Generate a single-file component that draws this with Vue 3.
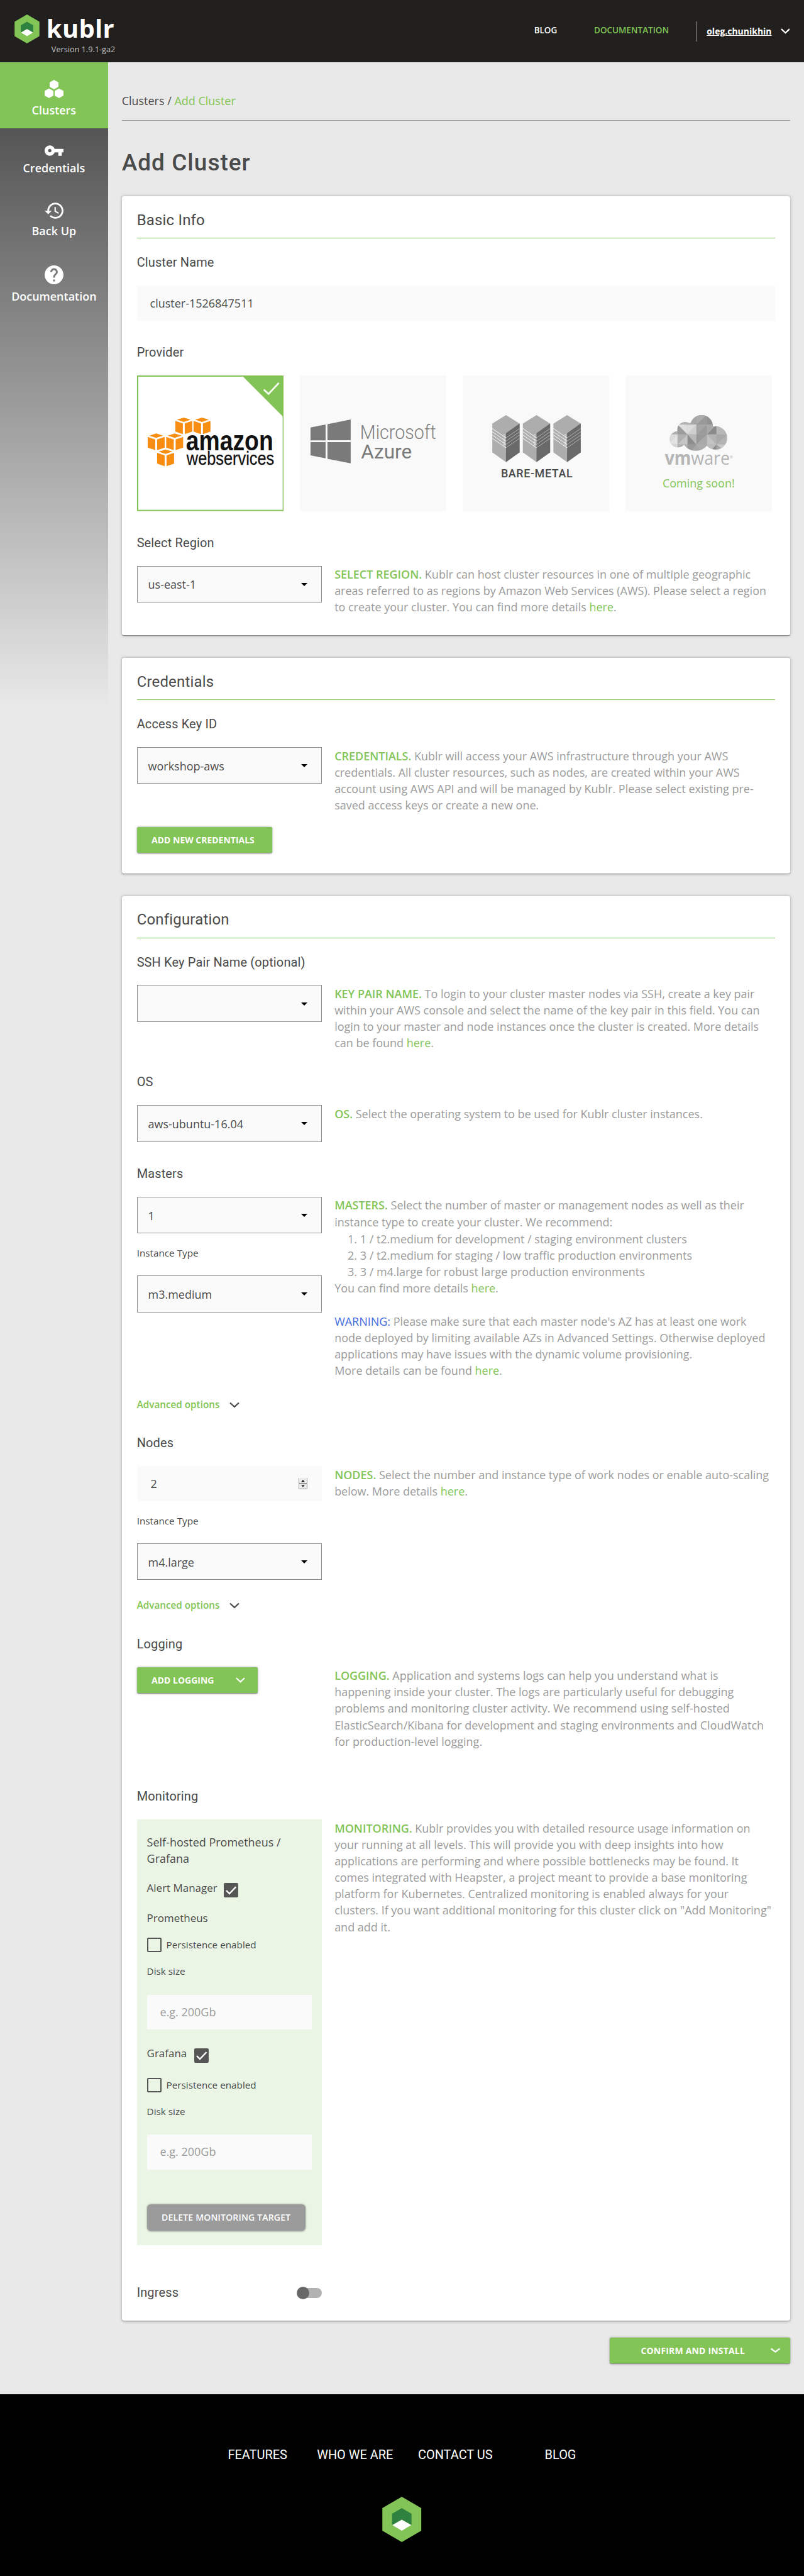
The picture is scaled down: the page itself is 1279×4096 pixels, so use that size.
<script setup>
const nav = [
  { id: 'clusters', label: 'Clusters', active: true },
  { id: 'credentials', label: 'Credentials' },
  { id: 'backup', label: 'Back Up' },
  { id: 'docs', label: 'Documentation' },
]
const awsCubes = [
  [53, 67], [82, 67], [9, 92.5], [38.5, 92.5], [24, 118],
]
const racks = [0, 48.7, 97.4]
const rackLines = [0, 5.2, 10.4, 15.6]
// [points, grey level] for each facet of the cloud
const facets = [
  ['99,78 113,78 99,94', '#dcdcdc'], ['113,78 113,94 99,94', '#cfcfcf'],
  ['83,78 99,94 83,94', '#9c9c9c'], ['83,78 99,78 99,94', '#dedede'],
  ['113,62 130,62 113,78', '#ababab'], ['113,78 130,62 130,78', '#999'],
  ['130,62 145,78 130,78', '#929292'], ['99,78 113,62 113,78', '#a6a6a6'],
  ['113,78 130,78 113,94', '#a5a5a5'], ['130,78 130,94 113,94', '#9b9b9b'],
  ['130,78 145,78 130,94', '#a9a9a9'], ['145,78 145,94 130,94', '#8b8b8b'],
  ['145,78 162,78 162,94 145,94', '#b8b8b8'],
  ['67,94 83,94 67,110', '#dadada'], ['83,94 83,110 67,110', '#e2e2e2'],
  ['83,94 99,94 83,110', '#b0b0b0'], ['99,94 99,110 83,110', '#c4c4c4'],
  ['99,94 113,110 99,110', '#8d8d8d'], ['99,94 113,94 113,110', '#b9b9b9'],
  ['113,94 130,94 113,110', '#999'], ['130,94 130,110 113,110', '#a9a9a9'],
  ['130,94 145,94 145,110', '#b3b3b3'], ['130,94 145,110 130,110', '#c3c3c3'],
  ['145,94 162,94 145,110', '#a9a9a9'], ['162,94 162,110 145,110', '#b4b4b4'],
  ['67,110 83,110 83,120 67,120', '#d6d6d6'], ['83,110 99,110 99,122 83,122', '#b0b0b0'],
  ['99,110 113,110 104,122 99,122', '#9a9a9a'], ['113,110 122,122 104,122', '#a6a6a6'],
  ['113,110 130,110 130,122 122,122', '#adadad'], ['130,110 145,110 136,122 130,122', '#bcbcbc'],
  ['145,110 145,122 134,122', '#8c8c8c'], ['145,110 162,110 162,122', '#cacaca'],
  ['145,110 158,122 145,122', '#a2a2a2'],
]
const footerLinks = ['FEATURES', 'WHO WE ARE', 'CONTACT US', 'BLOG']
</script>

<template>
  <div class="page">
    <header class="top">
      <svg class="logo" viewBox="0 0 62 72">
        <path d="M31 0 62 18V54L31 72 0 54V18z" fill="#82c556" />
        <path d="M31 18 46.5 27V45L31 36.500 15.500 45V27z" fill="#2f813f" />
        <path d="M31 36.500 46 45 31 54 16 45z" fill="#fff" />
      </svg>
      <div class="brand">
        <div class="word">kublr</div>
        <div class="version">Version 1.9.1-ga2</div>
      </div>
      <nav class="topnav">
        <a class="blog">BLOG</a>
        <a class="doc">DOCUMENTATION</a>
        <div class="user">
          <a>oleg.chunikhin</a>
          <svg width="15" height="9" viewBox="0 0 15 9"><path d="M1 1.200 7.500 7.300 14 1.200" fill="none" stroke="#fff" stroke-width="2.300" /></svg>
        </div>
      </nav>
    </header>

    <div class="body">
      <aside class="side">
        <a v-for="n in nav" :key="n.id" class="item" :class="{ active: n.active }">
          <svg v-if="n.id === 'clusters'" width="30" height="29" viewBox="0 0 30 29" fill="#fff">
            <path d="M15 0 22 4V11L15 15 8 11V4zM7 13.700 14 17.500V25L7 29 0 25V17.500zM23 13.700 30 17.500V25L23 29 16 25V17.500z" />
          </svg>
          <svg v-else-if="n.id === 'credentials'" width="30" height="17" viewBox="1 6 22 12" fill="#fff">
            <path d="M12.650 10C11.830 7.670 9.610 6 7 6c-3.310 0-6 2.690-6 6s2.690 6 6 6c2.610 0 4.830-1.670 5.650-4H17v4h4v-4h2v-4H12.650zM7 14c-1.100 0-2-.900-2-2s.900-2 2-2 2 .900 2 2-.900 2-2 2z" />
          </svg>
          <svg v-else-if="n.id === 'backup'" width="30" height="26" viewBox="1 3 21 18" fill="#fff">
            <path d="M13 3c-4.970 0-9 4.030-9 9H1l3.890 3.890.070.140L9 12H6c0-3.870 3.130-7 7-7s7 3.130 7 7-3.130 7-7 7c-1.930 0-3.680-.790-4.940-2.060l-1.420 1.420C8.270 19.990 10.510 21 13 21c4.970 0 9-4.030 9-9s-4.030-9-9-9zm-1 5v5l4.280 2.540.720-1.210-3.500-2.080V8H12z" />
          </svg>
          <svg v-else width="30" height="30" viewBox="2 2 20 20" fill="#fff">
            <path d="M12 2C6.480 2 2 6.480 2 12s4.480 10 10 10 10-4.480 10-10S17.520 2 12 2zm1 17h-2v-2h2v2zm2.070-7.750l-.900.920C13.450 12.900 13 13.500 13 15h-2v-.500c0-1.100.450-2.100 1.170-2.830l1.240-1.260c.370-.360.590-.860.590-1.410 0-1.100-.900-2-2-2s-2 .900-2 2H8c0-2.210 1.790-4 4-4s4 1.790 4 4c0 .880-.360 1.680-.930 2.250z" />
          </svg>
          <span>{{ n.label }}</span>
        </a>
      </aside>

      <main class="main">
        <div class="crumbs">Clusters / <a>Add Cluster</a></div>
        <h1>Add Cluster</h1>

        <section class="card basic">
          <h2>Basic Info</h2>
          <div class="sec s-name">
            <h3>Cluster Name</h3>
            <div class="input">cluster-1526847511</div>
          </div>
          <div class="sec s-provider">
            <h3>Provider</h3>
            <div class="providers">
              <svg class="prov" viewBox="0 0 234 216">
                <rect x="1" y="1" width="232" height="214" fill="#fff" stroke="#82c556" stroke-width="2" />
                <path d="M168 1H233V66z" fill="#82c556" />
                <path d="M202 22.500 209.500 29.500 226 12" fill="none" stroke="#fff" stroke-width="2.600" />
                <g v-for="(c, i) in awsCubes" :key="i" :transform="`translate(${c[0] + 8} ${c[1]})`" fill="#f78e11">
                  <path d="M13.500 0 24.500 3.300 13.500 7 2.500 3.300z" />
                  <path d="M0 5.300 12 9.300V26.500L0 22.500z" />
                  <path d="M27 5.300 15 9.300V26.500L27 22.500z" />
                </g>
                <text transform="translate(78 119.500) scale(.83 1)" class="amz">amazon</text>
                <text transform="translate(79 142) scale(.875 1)" class="ws">webservices</text>
              </svg>
              <svg class="prov" viewBox="0 0 234 216">
                <rect width="234" height="216" fill="#f9f9f9" />
                <path d="M17 82.800 41 78.200V103.400H17zM44 77.600 81 70V103.200H44zM17 106.200H41V132L17 127.200zM44 106.200H81V140L44 132.600z" fill="#7a7a7a" />
                <text x="96" y="101" class="ms" textLength="121" lengthAdjust="spacingAndGlyphs">Microsoft</text>
                <text x="97.500" y="132" class="az" textLength="81" lengthAdjust="spacingAndGlyphs">Azure</text>
              </svg>
              <svg class="prov" viewBox="0 0 234 216">
                <rect width="234" height="216" fill="#f9f9f9" />
                <g v-for="x in racks" :key="x" :transform="`translate(${x} 0)`">
                  <path d="M69 63 90.700 76.500V122.500L69 138 47.200 122.500V76.500z" fill="#adadad" />
                  <path d="M90.700 76.500V122.500L69 138V92z" fill="#696969" />
                  <path v-for="l in rackLines" :key="l" :d="`M47.200 ${84.500 + l} 69 ${99.500 + l}`" stroke="#f0f0f0" stroke-width="1.200" stroke-dasharray="2.200 .5" />
                  <path v-for="l in rackLines" :key="'r' + l" :d="`M69 ${99.500 + l} 90.700 ${84.500 + l}`" stroke="#b0b0b0" stroke-width="1" />
                  <path d="M66 94V112" stroke="#f0f0f0" stroke-width="2.400" stroke-dasharray="1 1.500" />
                </g>
                <text x="61" y="162.500" class="bm" textLength="114">BARE-METAL</text>
              </svg>
              <svg class="prov" viewBox="0 0 234 216">
                <defs>
                  <clipPath id="cloud">
                    <circle cx="121.300" cy="81" r="18" /><circle cx="143.500" cy="99.500" r="18.500" />
                    <circle cx="95" cy="86.500" r="12.500" /><circle cx="83.500" cy="101.500" r="13" />
                    <circle cx="112" cy="97" r="23" />
                  </clipPath>
                </defs>
                <rect width="234" height="216" fill="#f9f9f9" />
                <g clip-path="url(#cloud)">
                  <rect x="60" y="60" width="110" height="65" fill="#b0b0b0" />
                  <polygon v-for="(f, i) in facets" :key="i" :points="f[0]" :fill="f[1]" />
                </g>
                <text x="62.500" y="142" class="vm" textLength="42" lengthAdjust="spacingAndGlyphs">vm</text>
                <text x="104.500" y="142" class="ware" textLength="62" lengthAdjust="spacingAndGlyphs">ware</text>
                <text x="166" y="132" class="reg">®</text>
                <text x="59" y="178" class="soon" textLength="115">Coming soon!</text>
              </svg>
            </div>
          </div>
          <div class="sec">
            <h3>Select Region</h3>
            <div class="cols">
              <div class="select">us-east-1<i></i></div>
              <p class="help"><b>SELECT REGION.</b> Kublr can host cluster resources in one of multiple geographic<br>areas referred to as regions by Amazon Web Services (AWS). Please select a region<br>to create your cluster. You can find more details <a>here</a>.</p>
            </div>
          </div>
        </section>

        <section class="card creds">
          <h2>Credentials</h2>
          <div class="sec s-key">
            <h3>Access Key ID</h3>
            <div class="cols">
              <div class="select">workshop-aws<i></i></div>
              <p class="help"><b>CREDENTIALS.</b> Kublr will access your AWS infrastructure through your AWS<br>credentials. All cluster resources, such as nodes, are created within your AWS<br>account using AWS API and will be managed by Kublr. Please select existing pre-<br>saved access keys or create a new one.</p>
            </div>
          </div>
          <button class="btn new-cred">ADD NEW CREDENTIALS</button>
        </section>

        <section class="card config">
          <h2>Configuration</h2>
          <div class="sec s-ssh">
            <h3>SSH Key Pair Name (optional)</h3>
            <div class="cols">
              <div class="select"><i></i></div>
              <p class="help"><b>KEY PAIR NAME.</b> To login to your cluster master nodes via SSH, create a key pair<br>within your AWS console and select the name of the key pair in this field. You can<br>login to your master and node instances once the cluster is created. More details<br>can be found <a>here</a>.</p>
            </div>
          </div>
          <div class="sec s-os">
            <h3>OS</h3>
            <div class="cols">
              <div class="select">aws-ubuntu-16.04<i></i></div>
              <p class="help"><b>OS.</b> Select the operating system to be used for Kublr cluster instances.</p>
            </div>
          </div>
          <div class="sec s-masters">
            <h3>Masters</h3>
            <div class="cols">
              <div>
                <div class="select">1<i></i></div>
                <div class="sub">Instance Type</div>
                <div class="select">m3.medium<i></i></div>
                <div class="adv far">Advanced options <svg width="16" height="10" viewBox="0 0 16 10"><path d="M1 1.500 8 8 15 1.500" fill="none" stroke="#4a4a4a" stroke-width="2.300" /></svg></div>
              </div>
              <div class="help">
                <b>MASTERS.</b> Select the number of master or management nodes as well as their<br>instance type to create your cluster. We recommend:
                <ol>
                  <li>1. 1 / t2.medium for development / staging environment clusters</li>
                  <li>2. 3 / t2.medium for staging / low traffic production environments</li>
                  <li>3. 3 / m4.large for robust large production environments</li>
                </ol>
                You can find more details <a>here</a>.<br><br><em>WARNING:</em> Please make sure that each master node's AZ has at least one work<br>node deployed by limiting available AZs in Advanced Settings. Otherwise deployed<br>applications may have issues with the dynamic volume provisioning.<br>More details can be found <a>here</a>.
              </div>
            </div>
          </div>
          <div class="sec s-nodes">
            <h3>Nodes</h3>
            <div class="cols">
              <div>
                <div class="input number">2
                  <svg width="14" height="18" viewBox="0 0 14 18">
                    <path d="M.5 0V8.500H13.500V0M.5 9.500H13.500V17.500H.5z" fill="#ececec" stroke="#999" />
                    <path d="M7 3 9.800 6.200H4.200zM7 14.500 4.200 11.500H9.800z" fill="#111" />
                  </svg>
                </div>
                <div class="sub">Instance Type</div>
                <div class="select">m4.large<i></i></div>
                <div class="adv">Advanced options <svg width="16" height="10" viewBox="0 0 16 10"><path d="M1 1.500 8 8 15 1.500" fill="none" stroke="#4a4a4a" stroke-width="2.300" /></svg></div>
              </div>
              <p class="help"><b>NODES.</b> Select the number and instance type of work nodes or enable auto-scaling<br>below. More details <a>here</a>.</p>
            </div>
          </div>
          <div class="sec s-logging">
            <h3>Logging</h3>
            <div class="cols">
              <button class="btn add-log">ADD LOGGING <svg width="15" height="9" viewBox="0 0 15 9"><path d="M1 1.200 7.500 7.300 14 1.200" fill="none" stroke="#fff" stroke-width="2.200" /></svg></button>
              <p class="help"><b>LOGGING.</b> Application and systems logs can help you understand what is<br>happening inside your cluster. The logs are particularly useful for debugging<br>problems and monitoring cluster activity. We recommend using self-hosted<br>ElasticSearch/Kibana for development and staging environments and CloudWatch<br>for production-level logging.</p>
            </div>
          </div>
          <div class="sec s-monitoring">
            <h3>Monitoring</h3>
            <div class="cols">
              <div class="target">
                <div class="t-title">Self-hosted Prometheus /<br>Grafana</div>
                <div class="t-row alert">Alert Manager <svg class="on" viewBox="0 0 23 23"><rect width="23" height="23" rx="2" fill="#555" /><path d="M4 12 9 17 19.500 6" fill="none" stroke="#fff" stroke-width="2.400" /></svg></div>
                <div class="t-row prom">Prometheus</div>
                <div class="t-check"><span class="box"></span>Persistence enabled</div>
                <div class="t-sub">Disk size</div>
                <div class="t-input">e.g. 200Gb</div>
                <div class="t-row graf">Grafana <svg class="on" viewBox="0 0 23 23"><rect width="23" height="23" rx="2" fill="#555" /><path d="M4 12 9 17 19.500 6" fill="none" stroke="#fff" stroke-width="2.400" /></svg></div>
                <div class="t-check second"><span class="box"></span>Persistence enabled</div>
                <div class="t-sub">Disk size</div>
                <div class="t-input">e.g. 200Gb</div>
                <button class="btn delete">DELETE MONITORING TARGET</button>
              </div>
              <p class="help"><b>MONITORING.</b> Kublr provides you with detailed resource usage information on<br>your running at all levels. This will provide you with deep insights into how<br>applications are performing and where possible bottlenecks may be found. It<br>comes integrated with Heapster, a project meant to provide a base monitoring<br>platform for Kubernetes. Centralized monitoring is enabled always for your<br>clusters. If you want additional monitoring for this cluster click on "Add Monitoring"<br>and add it.</p>
            </div>
          </div>
          <div class="ingress">
            <h3>Ingress</h3>
            <svg width="40" height="20" viewBox="0 0 40 20"><rect x="4" y="2" width="36" height="16" rx="8" fill="#b2b2b2" /><circle cx="10" cy="10" r="10" fill="#686868" /></svg>
          </div>
        </section>

        <button class="btn confirm"><span>CONFIRM AND INSTALL</span><svg width="15" height="9" viewBox="0 0 15 9"><path d="M.5 1.500 7.500 6.700 14.500 1.500" fill="none" stroke="#fff" stroke-width="2.300" /></svg></button>
      </main>
    </div>

    <footer class="foot">
      <div class="links"><a v-for="l in footerLinks" :key="l">{{ l }}</a></div>
      <svg class="flogo" viewBox="0 0 62 72">
        <path d="M31 0 62 18V54L31 72 0 54V18z" fill="#82c556" />
        <path d="M31 18 46.500 27V45L31 36.500 15.500 45V27z" fill="#2f813f" />
        <path d="M31 36.500 46 45 31 54 16 45z" fill="#fff" />
      </svg>
    </footer>
  </div>
</template>

<style>
html, body { margin: 0; background: #000; }
</style>

<style scoped>
* { box-sizing: border-box; }
svg { display: block; flex: none; }
.page { zoom: 0.99844; width: 1281px; height: 4103px; overflow: hidden; background: #e9e9e9; font-family: "Open Sans", sans-serif; font-size: 18px; color: #4a4a4a; white-space: nowrap; }

.top { height: 99px; background: #22201e; display: flex; align-items: flex-start; color: #fff; }
.logo { width: 40px; height: 46px; margin: 23px 0 0 23px; }
.brand { margin: 25px 0 0 11px; }
.word { font-size: 40px; font-weight: 700; line-height: 40px; letter-spacing: .3px; }
.version { font-size: 12.700px; line-height: 16px; margin: 6px 0 0 8px; color: #c4c4c4; }
.topnav { margin-left: auto; width: 430px; padding-top: 34px; display: grid; grid-template-columns: 95.600px 162.400px 1fr; font-weight: 600; font-size: 13.500px; line-height: 30px; }
.doc { color: #82c556; }
.user { display: flex; align-items: center; border-left: 1px solid #999; padding-left: 16px; font-weight: 700; font-size: 14px; }
.user a { text-decoration: underline; line-height: 32px; }
.user svg { margin-left: 14px; }

.body { display: flex; height: 3714px; }
.side { width: 172px; flex: none; background: linear-gradient(#555, #e9e9e9) 0 105px / 100% 925px no-repeat; }
.item { display: flex; flex-direction: column; align-items: center; padding: 27px 0 15.500px; color: #fff; font-weight: 600; }
.item.active { background: #82c556; height: 105px; padding-top: 28px; }
.item span { margin-top: 8px; line-height: 24px; }

.main { flex: 1; padding: 49px 22px 0; }
.crumbs { height: 44px; line-height: 26px; border-bottom: 1px solid #999; }
a { color: inherit; }
.crumbs a, .help a { color: #82c556; }
h1 { margin: 43.500px 0 29.500px; font: 500 37px/48px Roboto, sans-serif; letter-spacing: 1.050px; }
.card { background: #fff; border-radius: 3px; padding: 0 24px; margin-bottom: 36px; box-shadow: 0 1px 1px #888, 0 1px 5px rgba(0, 0, 0, .25); }
.basic { height: 699px; }
.creds { height: 343px; }
.config { height: 2269px; margin-bottom: 27px; }
h2 { margin: 0 0 24px; height: 67px; padding-top: 22.500px; font: 400 24px/32px Roboto, sans-serif; letter-spacing: .2px; border-bottom: 1px solid #82c556; }
h3 { margin: 0 0 21.500px; font: 400 20px/29.500px Roboto, sans-serif; letter-spacing: .15px; }
.s-name { height: 143px; }
.s-provider { height: 303px; }
.s-key { height: 178px; }
.s-ssh { height: 191px; }
.s-os { height: 146px; }
.s-masters { height: 429px; }
.s-nodes { height: 320px; }
.s-logging { height: 243px; }
.s-monitoring { height: 791px; }

.input { height: 56px; padding-left: 21px; line-height: 57px; background: #fafafa; }
.number { display: flex; justify-content: space-between; align-items: center; padding: 0 23px 0 22px; }
.select { width: 295px; height: 58.500px; border: 1px solid #8e8e8e; background: #fafafa; padding: 1px 22px 0 17px; display: flex; align-items: center; justify-content: space-between; }
.select i { margin-left: auto; border: 5.500px solid transparent; border-top: 5.500px solid #000; border-bottom: 0; }
.cols { display: grid; grid-template-columns: 295px 1fr; column-gap: 20px; align-items: start; }
.help { margin: 0; padding-top: .5px; line-height: 26.150px; color: #9b9b9b; }
.help b { font-weight: 600; color: #82c556; }
.help em { font-style: normal; color: #3f6ce0; }
.help ol { list-style: none; margin: 1.500px 0 0; padding: 0 0 0 21px; }
.sub { font-size: 15.300px; line-height: 24px; margin: 19.500px 0 23.500px; }
.adv { display: flex; align-items: center; gap: 16px; margin-top: 28.500px; font-size: 15.300px; font-weight: 600; line-height: 24px; color: #82c556; }
.adv.far { margin-top: 135.500px; }

.providers { display: flex; gap: 25.500px; }
.prov { width: 234px; height: 216px; }
.amz { font: 700 45px "Liberation Sans", sans-serif; fill: #111; }
.ws { font: 400 29px "Liberation Sans", sans-serif; fill: #111; stroke: #111; stroke-width: .3px; }
.ms { font: 300 32px Roboto, sans-serif; fill: #7f7f7f; }
.az { font: 400 32px Roboto, sans-serif; fill: #7a7a7a; }
.bm { font: 500 18px Roboto, sans-serif; fill: #4a4a4a; }
.vm { font: 700 30px "Open Sans", sans-serif; fill: #b5b5b5; }
.ware { font: 400 30px "Open Sans", sans-serif; fill: #b5b5b5; }
.reg { font: 400 6px "Open Sans", sans-serif; fill: #b5b5b5; }
.soon { font: 400 18px "Open Sans", sans-serif; fill: #82c556; }

.btn { display: flex; align-items: center; height: 41px; padding: 0 23.500px; border: 0; border-radius: 3px; background: #82c556; color: #fff; font: 700 14px "Open Sans", sans-serif; box-shadow: 0 1px 1px #888, 0 1px 4px rgba(0, 0, 0, .3); white-space: nowrap; }
.new-cred { width: 216px; }
.add-log { width: 193px; justify-content: space-between; padding-right: 20px; }
.confirm { width: 288px; margin-left: auto; padding: 0 16px 0 50px; justify-content: space-between; letter-spacing: .2px; }

.target { height: 678px; background: #eaf5e5; padding: 23px 16px 0; }
.t-title { line-height: 26.150px; }
.t-row { display: flex; gap: 10px; font-size: 17px; line-height: 27px; height: 26px; }
.on { width: 23px; height: 23px; margin-top: 4.600px; }
.alert { margin-top: 21px; }
.prom { margin-top: 22px; }
.graf { margin-top: 25px; gap: 12px; }
.t-check { display: flex; gap: 8px; height: 23px; line-height: 24px; font-size: 15.300px; margin-top: 17.600px; }
.second { margin-top: 25.600px; }
.box { width: 23px; height: 23px; border: 2.100px solid #555; border-radius: 2px; }
.t-sub { font-size: 15.300px; line-height: 24px; margin: 19.500px 0 24.500px; }
.t-input { height: 55.500px; line-height: 55px; background: #fafafa; padding-left: 21px; color: #9b9b9b; }
.delete { height: 42px; width: 253px; margin-top: 55px; background: #9b9b9b; border-radius: 6px; box-shadow: 0 1px 3px rgba(0, 0, 0, .4); font-weight: 600; letter-spacing: .2px; }

.ingress { width: 295px; display: flex; justify-content: space-between; align-items: center; height: 28px; }
.ingress h3 { margin: 0; }

.foot { height: 290px; background: #000; color: #fff; padding-top: 83px; }
.links { display: grid; grid-template-columns: 142px 161px 202px auto; padding-left: 363px; font: 400 20px/28px Roboto, sans-serif; }
.flogo { width: 62.500px; height: 72px; margin: 52px auto 0; }
</style>
